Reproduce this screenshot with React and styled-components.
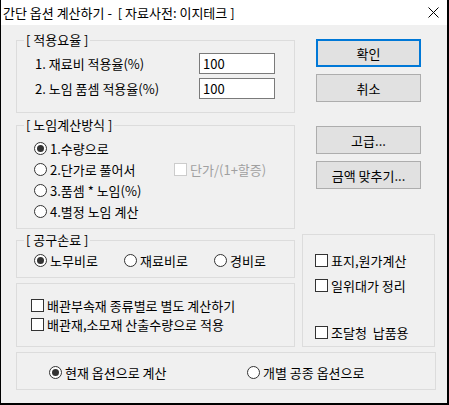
import React from 'react';
import styled, { createGlobalStyle } from 'styled-components';

const Global = createGlobalStyle`
  html, body { margin: 0; padding: 0; background: #ffffff; }
  body { font-family: "Noto Sans CJK KR", "Noto Sans", sans-serif; font-size: 13px; color: #000; }
`;

const Window = styled.div`
  width: 449px;
  height: 405px;
  box-sizing: border-box;
  border-left: 1px solid #000;
  border-right: 2px solid #000;
  border-bottom: 2px solid #000;
  display: flex;
  flex-direction: column;
  background: #f0f0f0;
`;

const TitleBar = styled.div`
  height: 25px;
  flex: none;
  background: #fff;
  display: flex;
  align-items: center;
  justify-content: space-between;
  padding: 0 8px 0 2px;
  font-size: 13px;
  line-height: 25px;
  white-space: pre;
`;

const Body = styled.div`
  flex: 1;
  padding: 14px 0 0 15px;
  display: flex;
  flex-direction: column;
`;

const Top = styled.div`
  display: flex;
`;

const LeftCol = styled.div`
  width: 279px;
  margin-top: 1px;
  display: flex;
  flex-direction: column;
`;

const RightCol = styled.div`
  width: 133px;
  margin-left: 7px;
  display: flex;
  flex-direction: column;
`;

const Group = styled.div`
  position: relative;
  box-sizing: border-box;
  border: 1px solid #dcdcdc;
  height: ${p => p.$h}px;
  width: ${p => (p.$w ? `${p.$w}px` : 'auto')};
  margin-top: ${p => p.$mt || 0}px;
  padding: ${p => p.$pad};
`;

const Legend = styled.span`
  position: absolute;
  top: -10px;
  left: 7px;
  padding: 0 2px;
  background: #f0f0f0;
  line-height: 18px;
  white-space: pre;
`;

const Row = styled.div`
  display: flex;
  align-items: center;
  height: ${p => p.$h || 21}px;
  margin-top: ${p => p.$mt || 0}px;
`;

const FieldLabel = styled.span`
  width: 164px;
  white-space: pre;
`;

const Input = styled.div`
  box-sizing: border-box;
  width: 76px;
  height: 21px;
  border: 1px solid #7a7a7a;
  background: #fff;
  padding: 0 3px;
  line-height: 19px;
`;

const Button = styled.div`
  box-sizing: border-box;
  width: 105px;
  height: 28px;
  margin-left: 14px;
  margin-top: ${p => p.$mt || 0}px;
  background: #e1e1e1;
  border: ${p => (p.$default ? '2px solid #0078d7' : '1px solid #adadad')};
  display: flex;
  align-items: center;
  justify-content: center;
  font-size: 13px;
`;

const Option = styled.label`
  display: flex;
  align-items: center;
  gap: 3px;
  width: ${p => (p.$w ? `${p.$w}px` : 'auto')};
  color: ${p => (p.$disabled ? '#a0a0a0' : '#000')};
  white-space: pre;
`;

const Circle = styled.span`
  box-sizing: border-box;
  width: 13px;
  height: 13px;
  border-radius: 50%;
  border: 1px solid #333;
  background: #fff;
  display: flex;
  align-items: center;
  justify-content: center;
  flex: none;
  &::after {
    content: '';
    display: ${p => (p.$on ? 'block' : 'none')};
    width: 7px;
    height: 7px;
    border-radius: 50%;
    background: #333;
  }
`;

const Box = styled.span`
  box-sizing: border-box;
  width: 13px;
  height: 13px;
  border: 1px solid ${p => (p.$disabled ? '#cccccc' : '#333')};
  background: #fff;
  flex: none;
`;

const Radio = ({ on, w, children }) => (
  <Option $w={w}>
    <Circle $on={on} />
    {children}
  </Option>
);

const Check = ({ disabled, w, children }) => (
  <Option $w={w} $disabled={disabled}>
    <Box $disabled={disabled} />
    {children}
  </Option>
);

const CloseIcon = () => (
  <svg width="11" height="11" viewBox="0 0 11 11">
    <path d="M0.5 0.5 L10.5 10.5 M10.5 0.5 L0.5 10.5" stroke="#000" strokeWidth="1" />
  </svg>
);

export default function App() {
  return (
    <Window>
      <Global />
      <TitleBar>
        <span>간단 옵션 계산하기 -  [ 자료사전: 이지테크 ]</span>
        <CloseIcon />
      </TitleBar>
      <Body>
        <Top>
          <LeftCol>
            <Group $h={73} $pad="12px 0 0 18px">
              <Legend>[ 적용요율 ]</Legend>
              <Row>
                <FieldLabel>1. 재료비 적용율(%)</FieldLabel>
                <Input>100</Input>
              </Row>
              <Row $mt={4}>
                <FieldLabel>2. 노임 품셈 적용율(%)</FieldLabel>
                <Input>100</Input>
              </Row>
            </Group>

            <Group $h={104} $mt={12} $pad="12px 0 0 17px">
              <Legend>[ 노임계산방식 ]</Legend>
              <Row><Radio on>1.수량으로</Radio></Row>
              <Row>
                <Radio w={140}>2.단가로 풀어서</Radio>
                <Check disabled>단가/(1+할증)</Check>
              </Row>
              <Row><Radio>3.품셈 * 노임(%)</Radio></Row>
              <Row><Radio>4.별정 노임 계산</Radio></Row>
            </Group>

            <Group $h={38} $mt={11} $pad="9px 0 0 17px">
              <Legend>[ 공구손료 ]</Legend>
              <Row>
                <Radio on w={90}>노무비로</Radio>
                <Radio w={90}>재료비로</Radio>
                <Radio>경비로</Radio>
              </Row>
            </Group>

            <Group $h={64} $mt={5} $pad="12px 0 0 14px">
              <Row $h={19}><Check>배관부속재 종류별로 별도 계산하기</Check></Row>
              <Row $h={19}><Check>배관재,소모재 산출수량으로 적용</Check></Row>
            </Group>
          </LeftCol>

          <RightCol>
            <Button $default>확인</Button>
            <Button $mt={7}>취소</Button>
            <Button $mt={24}>고급...</Button>
            <Button $mt={7}>금액 맞추기...</Button>
            <Group $h={113} $mt={45} $pad="15px 0 0 12px">
              <Row><Check>표지,원가계산</Check></Row>
              <Row $mt={4}><Check>일위대가 정리</Check></Row>
              <Row $mt={26}><Check>조달청  납품용</Check></Row>
            </Group>
          </RightCol>
        </Top>

        <Group $h={38} $w={420} $mt={5} $pad="9px 0 0 32px">
          <Row>
            <Radio on w={198}>현재 옵션으로 계산</Radio>
            <Radio>개별 공종 옵션으로</Radio>
          </Row>
        </Group>
      </Body>
    </Window>
  );
}
